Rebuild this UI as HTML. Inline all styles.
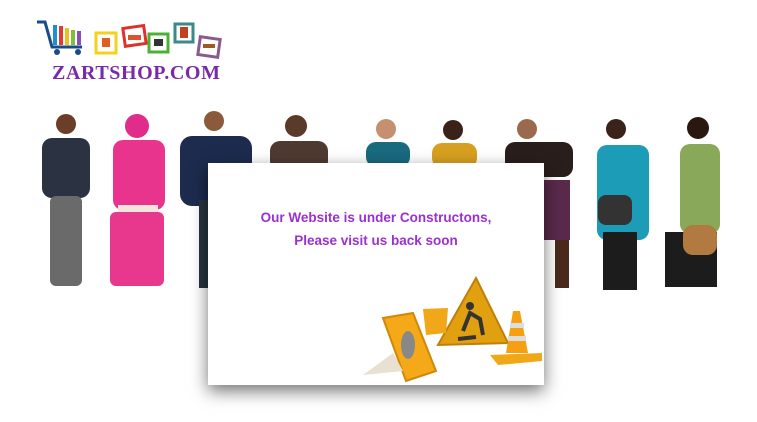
<!DOCTYPE html>
<html><head><style>
html,body{margin:0;padding:0;background:#fff;width:757px;height:422px;overflow:hidden;position:relative;font-family:"Liberation Sans",sans-serif}
#logo{position:absolute;left:52px;top:62px;font-family:"Liberation Serif",serif;font-size:20px;font-weight:bold;color:#7a2aa8;letter-spacing:0.6px}
#box{position:absolute;left:208px;top:163px;width:336px;height:222px;background:#fff;box-shadow:0 6px 16px rgba(0,0,0,.55)}
.t{position:absolute;left:0;width:100%;text-align:center;color:#9b2fd2;font-weight:bold;font-size:13.5px}
</style></head><body>
<svg width="757" height="422" style="position:absolute;left:0;top:0">
<g fill="none" stroke="#1b4a8a" stroke-width="3"><path d="M37 22 L45 22 L52 47 L82 47"/></g>
<rect x="53" y="25" width="4" height="20" fill="#1f8fd0"/><rect x="59" y="26" width="4" height="19" fill="#e03b2c"/><rect x="65" y="28" width="4" height="17" fill="#f0c020"/><rect x="71" y="30" width="4" height="15" fill="#7fbf3f"/><rect x="77" y="31" width="4" height="14" fill="#8a4fb0"/>
<circle cx="57" cy="52" r="3" fill="#1b4a8a"/><circle cx="78" cy="52" r="3" fill="#1b4a8a"/>
<rect x="96" y="33" width="20" height="20" fill="#fff" stroke="#f2d21c" stroke-width="3"/><rect x="102" y="38" width="8" height="9" fill="#e06020"/>
<rect x="124" y="27" width="21" height="18" fill="#fff" stroke="#e0302a" stroke-width="3" transform="rotate(-8 134 36)"/><rect x="128" y="35" width="13" height="5" fill="#e05030"/>
<rect x="149" y="34" width="19" height="18" fill="#fff" stroke="#4cb034" stroke-width="3"/><rect x="154" y="39" width="9" height="7" fill="#333"/>
<rect x="175" y="24" width="18" height="18" fill="#fff" stroke="#3a8a8a" stroke-width="3"/><rect x="180" y="27" width="8" height="11" fill="#c04020"/>
<rect x="199" y="38" width="20" height="18" fill="#fff" stroke="#8a5a8a" stroke-width="3" transform="rotate(8 209 47)"/><rect x="203" y="44" width="12" height="4" fill="#a05a20"/>
<g>
<circle cx="66" cy="124" r="10" fill="#6b3e28"/><rect x="42" y="138" width="48" height="60" rx="10" fill="#2b3342"/><rect x="50" y="196" width="32" height="90" rx="6" fill="#6a6a6a"/>
<circle cx="137" cy="126" r="12" fill="#e02c8a"/><rect x="113" y="140" width="52" height="70" rx="10" fill="#e8348c"/><rect x="118" y="205" width="40" height="10" fill="#f3e6dc"/><rect x="110" y="212" width="54" height="74" rx="6" fill="#e8388e"/>
<circle cx="214" cy="121" r="10" fill="#8a5a3a"/><rect x="180" y="136" width="72" height="70" rx="12" fill="#1c2b4e"/><rect x="199" y="200" width="16" height="88" fill="#2a3440"/>
<circle cx="296" cy="126" r="11" fill="#5a3a28"/><rect x="270" y="141" width="58" height="30" rx="10" fill="#4e3a30"/>
<circle cx="386" cy="129" r="10" fill="#c49070"/><rect x="366" y="142" width="44" height="25" rx="10" fill="#1a6a80"/>
<circle cx="453" cy="130" r="10" fill="#3a2218"/><rect x="432" y="143" width="45" height="25" rx="10" fill="#d8a020"/>
<circle cx="527" cy="129" r="10" fill="#9a6a4e"/><rect x="505" y="142" width="68" height="35" rx="10" fill="#2a1e1c"/><rect x="544" y="180" width="26" height="60" fill="#5a2a4a"/><rect x="555" y="240" width="14" height="48" fill="#4a2a1c"/>
<circle cx="616" cy="129" r="10" fill="#3a2218"/><rect x="597" y="145" width="52" height="95" rx="10" fill="#1d9cb8"/><rect x="603" y="232" width="34" height="58" fill="#1c1c1c"/><rect x="598" y="195" width="34" height="30" rx="8" fill="#333"/>
<circle cx="698" cy="128" r="11" fill="#2a1810"/><rect x="680" y="144" width="40" height="90" rx="10" fill="#8aa85a"/><rect x="665" y="232" width="52" height="55" fill="#1c1c1c"/><rect x="683" y="225" width="34" height="30" rx="10" fill="#b07a40"/>
</g>
</svg>
<div id="logo">ZARTSHOP.COM</div>
<div id="box">
<div class="t" style="top:47px">Our Website is under Constructons,</div>
<div class="t" style="top:70px">Please visit us back soon</div>
<svg width="336" height="222" style="position:absolute;left:0;top:0">
<polygon points="268,115 300,180 230,182" fill="#e0a010" stroke="#c08008" stroke-width="2"/>
<path d="M255 168 L262 150 L272 156 L275 172 M250 176 L268 174" stroke="#333" stroke-width="4" fill="none"/><circle cx="262" cy="143" r="4" fill="#333"/>
<polygon points="305,148 312,148 320,190 298,190" fill="#f5a010"/><rect x="302" y="160" width="14" height="5" fill="#ddd"/><rect x="300" y="173" width="18" height="5" fill="#ddd"/>
<polygon points="282,192 334,190 334,198 290,202" fill="#f0a818"/>
<polygon points="175,155 205,150 228,208 198,218" fill="#f5a818" stroke="#d08808" stroke-width="2"/><ellipse cx="200" cy="182" rx="7" ry="14" fill="#888"/>
<polygon points="215,146 240,145 238,170 218,172" fill="#f0a818"/>
<polygon points="185,190 155,212 195,208" fill="#e8e0d0"/>
</svg>
</div>
</body></html>
